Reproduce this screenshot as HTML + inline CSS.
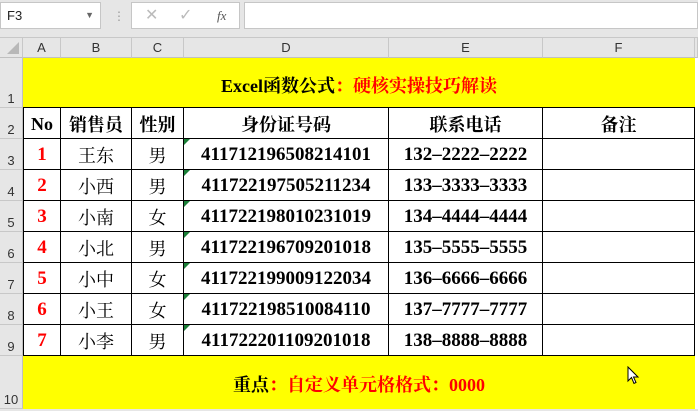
<!DOCTYPE html>
<html><head><meta charset="utf-8"><style>
*{margin:0;padding:0;box-sizing:border-box}
body{width:698px;height:411px;overflow:hidden;background:#fff;position:relative;font-family:"Liberation Sans",sans-serif}
.a{position:absolute}
.tb{left:0;top:0;width:698px;height:38px;background:#e6e6e6;border-bottom:1px solid #c8c8c8}
.box{background:#fff;border:1px solid #c6c6c6}
.ch{top:38px;height:20px;background:#e6e6e6;border-right:1px solid #c8c8c8;border-bottom:1px solid #c0c0c0;font-size:13px;color:#333;text-align:center;line-height:20px}
.rh{left:0;width:23px;background:#e6e6e6;border-bottom:1px solid #c8c8c8;border-right:1px solid #c0c0c0;font-size:13px;color:#333;text-align:center;display:flex;align-items:flex-end;justify-content:center;padding-bottom:1px}
.c{font-family:"Liberation Serif","Noto Serif CJK SC",serif;font-size:18px;color:#000;text-align:center;display:flex;align-items:center;justify-content:center;border-right:1.5px solid #000;border-bottom:1.5px solid #000;padding-top:2px}
.b{font-weight:bold}
.n{font-size:19px}
.r{color:#f00}
.tri{position:absolute;left:0;top:0;width:0;height:0;border-top:6px solid #1a7f37;border-right:6px solid transparent}
</style></head><body>
<div class="a tb"></div>
<div class="a box" style="left:0;top:2px;width:101px;height:27px;font-size:13px;line-height:25px;padding-left:6px;color:#222">F3<span style="position:absolute;right:6px;top:0;font-size:9px;color:#666">▼</span></div>
<div class="a" style="left:113px;top:9px;color:#999;font-size:12px">⋮</div>
<div class="a box" style="left:131px;top:2px;width:109px;height:27px;color:#bbb;font-size:16px;line-height:25px"><span style="position:absolute;left:13px">✕</span><span style="position:absolute;left:47px">✓</span><span style="position:absolute;left:85px;font-family:'Liberation Serif',serif;font-style:italic;font-size:13px;color:#555">fx</span></div>
<div class="a box" style="left:244px;top:2px;width:454px;height:27px"></div>
<div class="a ch" style="left:0;width:23px"><div style="position:absolute;right:3px;bottom:3px;width:0;height:0;border-bottom:12px solid #b8b8b8;border-left:12px solid transparent"></div></div>
<div class="a ch" style="left:23px;width:38px">A</div>
<div class="a ch" style="left:61px;width:71px">B</div>
<div class="a ch" style="left:132px;width:52px">C</div>
<div class="a ch" style="left:184px;width:205px">D</div>
<div class="a ch" style="left:389px;width:154px">E</div>
<div class="a ch" style="left:543px;width:152px">F</div>
<div class="a ch" style="left:695px;width:3px"></div>

<div class="a rh" style="top:58px;height:50px">1</div>
<div class="a rh" style="top:108px;height:31px">2</div>
<div class="a rh" style="top:139px;height:31px">3</div>
<div class="a rh" style="top:170px;height:31px">4</div>
<div class="a rh" style="top:201px;height:31px">5</div>
<div class="a rh" style="top:232px;height:31px">6</div>
<div class="a rh" style="top:263px;height:31px">7</div>
<div class="a rh" style="top:294px;height:31px">8</div>
<div class="a rh" style="top:325px;height:31px">9</div>
<div class="a rh" style="top:356px;height:53px">10</div>
<div class="a" style="left:0;top:409px;width:698px;height:2px;background:#e6e6e6"></div>

<div class="a" style="left:23px;top:58px;width:672px;height:50px;background:#ff0;border-bottom:1.5px solid #000;font-family:'Liberation Serif','Noto Serif CJK SC',serif;font-weight:bold;font-size:18px;display:flex;align-items:center;justify-content:center;padding-top:4px">Excel函数公式<span class="r">：硬核实操技巧解读</span></div>
<div class="a" style="left:23px;top:356px;width:672px;height:53px;background:#ff0;font-family:'Liberation Serif','Noto Serif CJK SC',serif;font-weight:bold;font-size:18px;display:flex;align-items:center;justify-content:center;padding-top:2px">重点<span class="r">：自定义单元格格式：0000</span></div>
<div class="a" style="left:627px;top:366px;font-size:16px;color:#000">
<svg width="14" height="20" viewBox="0 0 14 20"><path d="M1 1 L1 15 L4.5 11.5 L7 17.5 L9 16.5 L6.5 11 L11 11 Z" fill="#fff" stroke="#000" stroke-width="1"/></svg></div>

<div id="t"></div>
<script>
var cols=[[23,38],[61,71],[132,52],[184,205],[389,154],[543,152]];
var rows=[
["No","销售员","性别","身份证号码","联系电话","备注"],
["1","王东","男","411712196508214101","132–2222–2222",""],
["2","小西","男","411722197505211234","133–3333–3333",""],
["3","小南","女","411722198010231019","134–4444–4444",""],
["4","小北","男","411722196709201018","135–5555–5555",""],
["5","小中","女","411722199009122034","136–6666–6666",""],
["6","小王","女","411722198510084110","137–7777–7777",""],
["7","小李","男","411722201109201018","138–8888–8888",""]];
var h="";
for(var i=0;i<rows.length;i++){var yy=108+31*i;
for(var j=0;j<6;j++){var cls="a c";
if(i==0||j==0||j==3||j==4)cls+=" b";
if(i>0&&j==0)cls+=" r";
if(i>0&&(j==0||j==3||j==4))cls+=" n";
var st="left:"+cols[j][0]+"px;top:"+yy+"px;width:"+cols[j][1]+"px;height:31px;";
if(j==0)st+="border-left:1.5px solid #000;";
h+='<div class="'+cls+'" style="'+st+'">'+(i>0&&j==3?'<div class="tri"></div>':'')+rows[i][j]+'</div>';}}
document.getElementById("t").innerHTML=h;
</script>
</body></html>
